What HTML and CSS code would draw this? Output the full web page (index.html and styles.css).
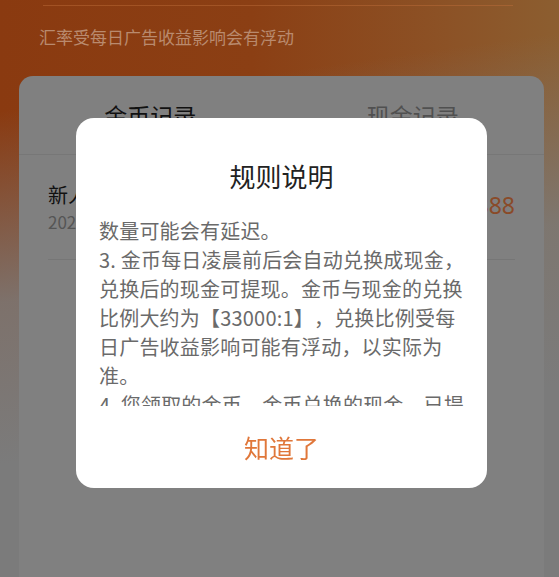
FILE: index.html
```html
<!DOCTYPE html>
<html lang="zh-CN">
<head>
<meta charset="utf-8">
<title>规则说明</title>
<link rel="stylesheet" href="styles.css">
</head>
<body>
<div class="page">
  <div class="header">
    <div class="header-line"></div>
    <div class="rate-note">汇率受每日广告收益影响会有浮动</div>
  </div>
  <div class="card">
    <div class="tabs">
      <div class="tab tab-active">金币记录</div>
      <div class="tab">现金记录</div>
    </div>
    <div class="record">
      <div class="record-info">
        <div class="record-title">新人红包奖励</div>
        <div class="record-date">2023-05-12 10:21</div>
      </div>
      <div class="record-amount">+888</div>
    </div>
  </div>
</div>

<div class="overlay">
  <div class="modal">
    <div class="modal-title">规则说明</div>
    <div class="modal-body">
      <p>数量可能会有延迟。</p>
      <p>3. 金币每日凌晨前后会自动兑换成现金，<br>兑换后的现金可提现。金币与现金的兑换<br>比例大约为【33000:1】，兑换比例受每<br>日广告收益影响可能有浮动，以实际为<br>准。</p>
      <p>4. 您领取的金币、金币兑换的现金，已提</p>
    </div>
    <div class="modal-button">知道了</div>
  </div>
</div>
</body>
</html>
```

FILE: styles.css
```css
html, body {
  margin: 0;
  padding: 0;
}
body {
  width: 559px;
  height: 577px;
  overflow: hidden;
  font-family: "Noto Sans CJK SC", "Noto Sans", sans-serif;
  background:
    linear-gradient(172deg, rgba(123,123,123,0) 0px, rgba(123,123,123,0) 110px, rgba(123,123,123,0.85) 300px, #7b7b7b 460px),
    linear-gradient(90deg, #8a3a10 0%, #8b3f14 45%, #8c5226 80%, #8c5e30 100%);
}
.page {
  height: 577px;
  display: flex;
  flex-direction: column;
}
.header {
  height: 76px;
  padding: 0 46px 0 39px;
  box-sizing: border-box;
}
.header-line {
  margin-top: 5px;
  height: 1px;
  background: rgba(190, 110, 60, 0.45);
  margin-left: 4px;
}
.rate-note {
  margin-top: 19px;
  font-size: 17px;
  line-height: 24px;
  color: #b98a6e;
  white-space: nowrap;
}
.card {
  margin: 0 15px 0 19px;
  flex: 1;
  background: #808080;
  border-radius: 14px 14px 0 0;
}
.tabs {
  display: flex;
  height: 79px;
  border-bottom: 1px solid #777777;
  box-sizing: border-box;
}
.tab {
  flex: 1;
  text-align: center;
  font-size: 23px;
  line-height: 79px;
  color: #505050;
}
.tab-active {
  color: #111111;
}
.record {
  margin: 0 29px;
  height: 105px;
  border-bottom: 1px solid #767676;
  display: flex;
  align-items: center;
  justify-content: space-between;
  box-sizing: border-box;
}
.record-info {
  display: flex;
  flex-direction: column;
  padding-top: 2px;
}
.record-title {
  font-size: 20px;
  line-height: 28px;
  color: #111111;
}
.record-date {
  font-size: 17px;
  line-height: 26px;
  color: #555555;
}
.record-amount {
  font-family: "Noto Sans", sans-serif;
  font-size: 23px;
  color: #8a4a28;
  padding-bottom: 4px;
}

.overlay {
  position: fixed;
  left: 0;
  top: 0;
  right: 0;
  bottom: 0;
  display: flex;
  align-items: flex-start;
  padding: 118px 0 0 76px;
}
.modal {
  width: 411px;
  background: #ffffff;
  border-radius: 18px;
  padding-top: 40px;
  display: flex;
  flex-direction: column;
}
.modal-title {
  text-align: center;
  font-size: 26px;
  line-height: 36px;
  color: #222222;
}
.modal-body {
  margin-top: 22px;
  height: 190px;
  overflow: hidden;
  padding: 0 10px 0 23px;
  font-size: 20px;
  line-height: 29px;
  color: #6a6a6a;
  letter-spacing: 0.2px;
  white-space: nowrap;
  text-spacing-trim: space-all;
}
.modal-body p {
  margin: 0;
}
.modal-button {
  height: 82px;
  line-height: 82px;
  text-align: center;
  font-size: 25px;
  color: #e0773a;
}
```
